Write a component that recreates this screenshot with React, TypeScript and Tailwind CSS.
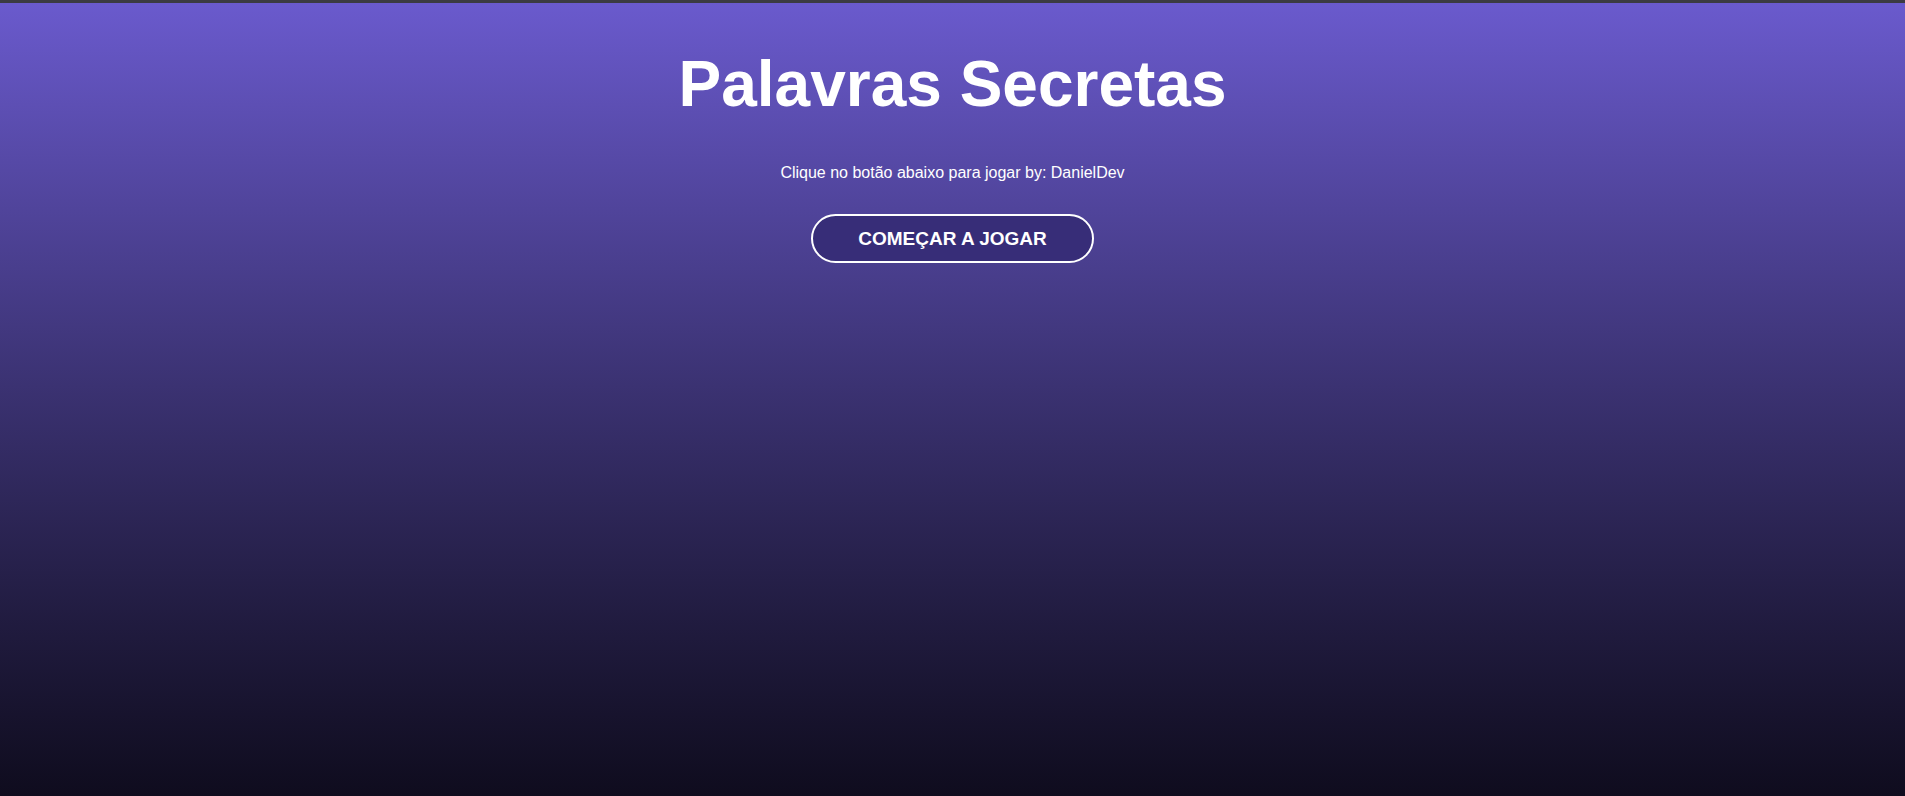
import React from 'react';

export default function App() {
  return (
    <div className="min-h-screen flex flex-col font-['Liberation_Sans',Arial,sans-serif]">
      <div className="h-[3px] bg-[#3b3b42]" />
      <main className="flex-1 min-h-[793px] flex flex-col items-center bg-gradient-to-b from-[#6a5acd] to-[#0f0c1e] text-white">
        <h1 className="mt-[49px] text-[64px] leading-none font-bold">Palavras Secretas</h1>
        <p className="mt-[49px] text-base leading-none">
          Clique no botão abaixo para jogar by: DanielDev
        </p>
        <button className="mt-[33px] w-[283px] h-[49px] rounded-full border-2 border-white bg-[#372d78] text-[19px] leading-none font-bold flex items-center justify-center">
          COMEÇAR A JOGAR
        </button>
      </main>
    </div>
  );
}
